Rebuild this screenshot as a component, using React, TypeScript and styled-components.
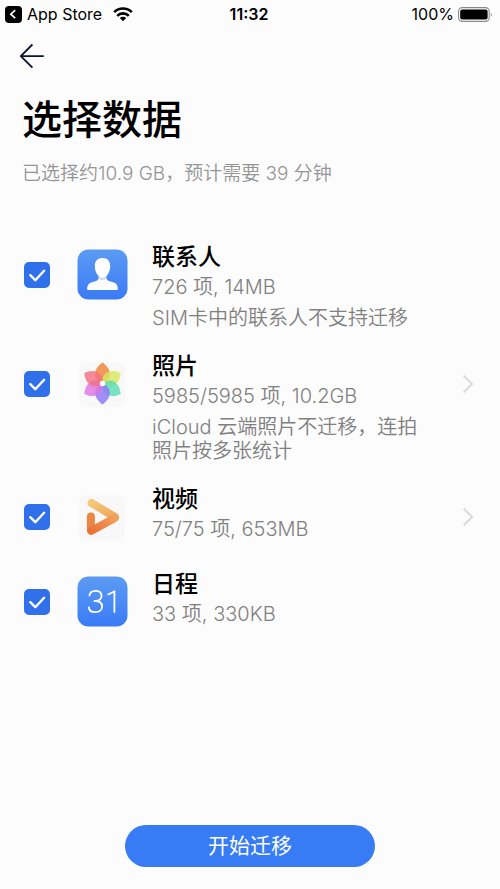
import React, { useState } from 'react';
import styled, { createGlobalStyle } from 'styled-components';

const GlobalStyle = createGlobalStyle`
  *, *::before, *::after { box-sizing: border-box; }
  body {
    margin: 0;
    background: #fcfcfc;
    color: #000;
    font-family: Inter, "Noto Sans CJK SC", sans-serif;
  }
  h1, h2, p, ul { margin: 0; padding: 0; }
  button { font-family: inherit; cursor: pointer; }
`;

const Screen = styled.div`
  display: flex;
  flex-direction: column;
  min-height: 100vh;
`;

const StatusBar = styled.header`
  display: grid;
  grid-template-columns: 1fr auto 1fr;
  align-items: center;
  height: 28px;
  padding: 0 7px 0 5px;
  font-size: 16px;
  line-height: 20px;
`;

const StatusGroup = styled.div<{ $end?: boolean }>`
  display: flex;
  align-items: center;
  justify-content: ${(p) => (p.$end ? 'flex-end' : 'flex-start')};
  gap: ${(p) => (p.$end ? 4 : 11)}px;
`;

const ReturnLink = styled.a`
  display: flex;
  align-items: center;
  gap: 5px;
  color: inherit;
  text-decoration: none;
`;

const Clock = styled.time`
  font-weight: 600;
`;

const NavBar = styled.nav`
  display: flex;
  padding: 14px 18px 0;
`;

const BackButton = styled.button`
  display: flex;
  padding: 0;
  border: 0;
  background: none;
`;

const Main = styled.main`
  flex: 1;
  padding: 24px 22px 20px;
`;

const PageTitle = styled.h1`
  font-size: 40px;
  line-height: 52px;
  font-weight: 500;
`;

const Summary = styled.p`
  margin-top: 14px;
  font-size: 19px;
  line-height: 28px;
  font-weight: 350;
  color: #959595;
`;

const DataList = styled.ul`
  display: flex;
  flex-direction: column;
  gap: 21px;
  margin-top: 54px;
  list-style: none;
`;

const DataRow = styled.li`
  display: grid;
  grid-template-columns: 28px 52px 1fr 16px;
  column-gap: 26px;
`;

const Slot = styled.div`
  display: flex;
  align-items: center;
  height: 52px;
  margin-top: 7px;
`;

const CheckFrame = styled.span`
  display: grid;
  width: 26px;
  height: 26px;
  margin-left: 2px;

  & > * { grid-area: 1 / 1; }
  & > svg { pointer-events: none; visibility: hidden; }
  & > input:checked + svg { visibility: visible; }
`;

const CheckInput = styled.input`
  appearance: none;
  width: 26px;
  height: 26px;
  margin: 0;
  border: 2px solid #b8bcc4;
  border-radius: 5px;
  cursor: pointer;

  &:checked {
    border-color: #3070ea;
    background: #3070ea;
  }
`;

const RowText = styled.div`
  margin: 0 0 0 -2px;
`;

const RowTitle = styled.h2`
  font-size: 23px;
  line-height: 30px;
  font-weight: 500;

  label { cursor: pointer; }
`;

const RowDetail = styled.p`
  padding-bottom: 4px;
  font-size: 20px;
  line-height: 30px;
  font-weight: 350;
  color: #808080;
`;

const RowNote = styled.p`
  font-size: 20px;
  line-height: 24px;
  font-weight: 350;
  color: #808080;
`;

const OpenButton = styled.button`
  display: flex;
  padding: 0;
  border: 0;
  background: none;
`;

const Footer = styled.footer`
  display: flex;
  justify-content: center;
  padding-bottom: 22px;
`;

const StartButton = styled.button`
  width: 50%;
  height: 42px;
  border: 0;
  border-radius: 21px;
  background: #377bf5;
  color: #fff;
  font-size: 21px;
  line-height: 30px;
`;

const ReturnIcon = () => (
  <svg width="17" height="17" viewBox="0 0 17 17" aria-hidden="true">
    <rect width="17" height="17" rx="4" fill="#000" />
    <path d="M10.2 4.2 5.8 8.2l4.4 4" fill="none" stroke="#fff" strokeWidth="1.7" />
  </svg>
);

const WifiIcon = () => (
  <svg width="20" height="15" viewBox="0 0 20 15" aria-label="Wi-Fi">
    <g fill="none" stroke="#000" strokeWidth="2.6">
      <path d="M1.2 5.2a12.4 12.4 0 0 1 17.6 0" />
      <path d="M4.2 8.8a8.1 8.1 0 0 1 11.6 0" />
    </g>
    <path d="M6.8 11.1a4.6 4.6 0 0 1 6.4 0L10 14.2Z" fill="#000" />
  </svg>
);

const BatteryIcon = () => (
  <svg width="35" height="15" viewBox="0 0 35 15" aria-label="Battery">
    <rect x="0.6" y="0.6" width="30.6" height="13.8" rx="3.8" fill="none" stroke="#8a8a8a" strokeWidth="1.1" />
    <rect x="2.2" y="2.4" width="27.4" height="10.2" rx="2" fill="#000" />
    <path d="M32.9 5.4q1.8 2.1 0 4.2z" fill="#8a8a8a" />
  </svg>
);

const BackIcon = () => (
  <svg width="28" height="28" viewBox="0 0 28 28" aria-hidden="true">
    <path
      d="M14.4 2.5 2.8 14.1l11.6 11.6M3 14.1h22.8"
      fill="none"
      stroke="#10152f"
      strokeWidth="1.9"
      strokeLinejoin="round"
    />
  </svg>
);

const CheckMark = () => (
  <svg width="26" height="26" viewBox="0 0 26 26" aria-hidden="true">
    <path
      d="m6.3 13.2 5 5 8.8-9.4"
      fill="none"
      stroke="#fff"
      strokeWidth="2.4"
      strokeLinecap="round"
      strokeLinejoin="round"
    />
  </svg>
);

const ChevronIcon = () => (
  <svg width="16" height="22" viewBox="0 0 16 22" aria-hidden="true">
    <path d="m1.6 2.5 8.6 8.5-8.6 8.5" fill="none" stroke="#d8d8d8" strokeWidth="1.8" />
  </svg>
);

const BlueTile = ({ id, children }: { id: string; children: React.ReactNode }) => (
  <svg width="52" height="52" viewBox="0 0 52 52" aria-hidden="true">
    <defs>
      <linearGradient id={id} x1="0" y1="0" x2="0" y2="1">
        <stop offset="0" stopColor="#5c9bf3" />
        <stop offset="1" stopColor="#3a7bf6" />
      </linearGradient>
    </defs>
    <rect x="1.5" y="0.5" width="50" height="50" rx="11" fill={`url(#${id})`} />
    {children}
  </svg>
);

const ContactsIcon = () => (
  <BlueTile id="contacts-tile">
    <path
      d="M26.5 9c4.9 0 7.7 3.2 7.7 7.8 0 4.5-1.5 8.2-3.9 10.2v2.4c.4 2 3 2.6 6.2 3.7 3.8 1.3 5.3 3.2 5.3 7 0 .7-.4 1-1 1H12.2c-.6 0-1-.3-1-1 0-3.8 1.5-5.7 5.3-7 3.2-1.1 5.8-1.7 6.2-3.7V27c-2.4-2-3.9-5.7-3.9-10.2 0-4.6 2.8-7.8 7.7-7.8Z"
      fill="#fff"
    />
    <path d="M22.7 27c2.3 2 5.3 2 7.6 0v2.4c-2 2-5.6 2-7.6 0Z" fill="#cfdcf5" />
  </BlueTile>
);

const CalendarIcon = () => (
  <BlueTile id="calendar-tile">
    <g fill="none" stroke="#fff" strokeWidth="1.8">
      <path d="M13.4 20.2c.1-3.3 2.5-5.4 6-5.4 3.7 0 6.1 1.9 6.1 5s-2.4 5.2-6.1 5.2h-1.7M19.4 25c4 0 6.7 2.1 6.7 5.6 0 3.4-2.7 5.6-6.7 5.6-3.9 0-6.5-2.1-6.6-5.6" />
      <path d="M31.6 18.7 38.4 15.5v21.3" />
    </g>
  </BlueTile>
);

const PETALS = [
  ['#ee8438', 0],
  ['#dbe860', 60],
  ['#5cdcb4', 120],
  ['#8c78f4', 180],
  ['#dd74e0', 240],
  ['#f27084', 300],
] as const;

const PhotosIcon = () => (
  <svg width="52" height="52" viewBox="0 0 52 52" aria-hidden="true">
    <rect x="3" y="4" width="46" height="45" rx="8" fill="#f8f8f8" />
    {PETALS.map(([color, angle]) => (
      <path
        key={angle}
        d="M26.5 25.5C21 23 18.7 19.5 19.2 15c.4-4.300 3.500-7.800 7.300-10.500 3.800 2.700 6.900 6.200 7.300 10.500.5 4.500-1.800 8-7.300 10.500Z"
        fill={color}
        fillOpacity="0.82"
        transform={`rotate(${angle} 26.5 25.5)`}
      />
    ))}
    <circle cx="26.5" cy="25.5" r="2.7" fill="#fff" />
  </svg>
);

const VideoIcon = () => (
  <svg width="52" height="52" viewBox="0 0 52 52" aria-hidden="true">
    <defs>
      <linearGradient id="video-top" x1="0" y1="0" x2="1" y2="1">
        <stop offset="0" stopColor="#f6c878" />
        <stop offset="1" stopColor="#efa45b" />
      </linearGradient>
      <linearGradient id="video-base" x1="0" y1="1" x2="1" y2="0">
        <stop offset="0" stopColor="#ea7138" />
        <stop offset="1" stopColor="#efa159" />
      </linearGradient>
    </defs>
    <rect x="3" y="4" width="46" height="45" rx="8" fill="#f8f8f8" />
    <g fill="none" strokeWidth="8" strokeLinecap="round" strokeLinejoin="round">
      <path d="M15.6 12 38.8 26" stroke="url(#video-top)" />
      <path d="M14.9 25.5V39" stroke="#ec8645" />
      <path d="M15.4 39.8 38.8 27" stroke="url(#video-base)" />
    </g>
  </svg>
);

type Item = {
  id: string;
  title: string;
  detail: string;
  note?: string;
  opens?: boolean;
  Icon: () => React.ReactElement;
};

const ITEMS: Item[] = [
  { id: 'contacts', title: '联系人', detail: '726 项, 14MB', note: 'SIM卡中的联系人不支持迁移', Icon: ContactsIcon },
  {
    id: 'photos',
    title: '照片',
    detail: '5985/5985 项, 10.2GB',
    note: 'iCloud 云端照片不迁移，连拍照片按多张统计',
    opens: true,
    Icon: PhotosIcon,
  },
  { id: 'videos', title: '视频', detail: '75/75 项, 653MB', opens: true, Icon: VideoIcon },
  { id: 'calendar', title: '日程', detail: '33 项, 330KB', Icon: CalendarIcon },
];

export default function App() {
  const [selected, setSelected] = useState<string[]>(ITEMS.map((item) => item.id));

  const toggle = (id: string) =>
    setSelected((ids) => (ids.includes(id) ? ids.filter((other) => other !== id) : [...ids, id]));

  return (
    <Screen lang="zh-CN">
      <GlobalStyle />
      <StatusBar>
        <StatusGroup>
          <ReturnLink href="#">
            <ReturnIcon />
            App Store
          </ReturnLink>
          <WifiIcon />
        </StatusGroup>
        <Clock>11:32</Clock>
        <StatusGroup $end>
          100%
          <BatteryIcon />
        </StatusGroup>
      </StatusBar>
      <NavBar>
        <BackButton type="button" aria-label="返回">
          <BackIcon />
        </BackButton>
      </NavBar>
      <Main>
        <PageTitle>选择数据</PageTitle>
        <Summary>已选择约10.9 GB，预计需要 39 分钟</Summary>
        <DataList>
          {ITEMS.map(({ id, title, detail, note, opens, Icon }) => (
            <DataRow key={id}>
              <Slot>
                <CheckFrame>
                  <CheckInput
                    type="checkbox"
                    id={id}
                    checked={selected.includes(id)}
                    onChange={() => toggle(id)}
                  />
                  <CheckMark />
                </CheckFrame>
              </Slot>
              <Slot>
                <Icon />
              </Slot>
              <RowText>
                <RowTitle>
                  <label htmlFor={id}>{title}</label>
                </RowTitle>
                <RowDetail>{detail}</RowDetail>
                {note && <RowNote>{note}</RowNote>}
              </RowText>
              {opens && (
                <Slot>
                  <OpenButton type="button" aria-label={title}>
                    <ChevronIcon />
                  </OpenButton>
                </Slot>
              )}
            </DataRow>
          ))}
        </DataList>
      </Main>
      <Footer>
        <StartButton type="button">开始迁移</StartButton>
      </Footer>
    </Screen>
  );
}
